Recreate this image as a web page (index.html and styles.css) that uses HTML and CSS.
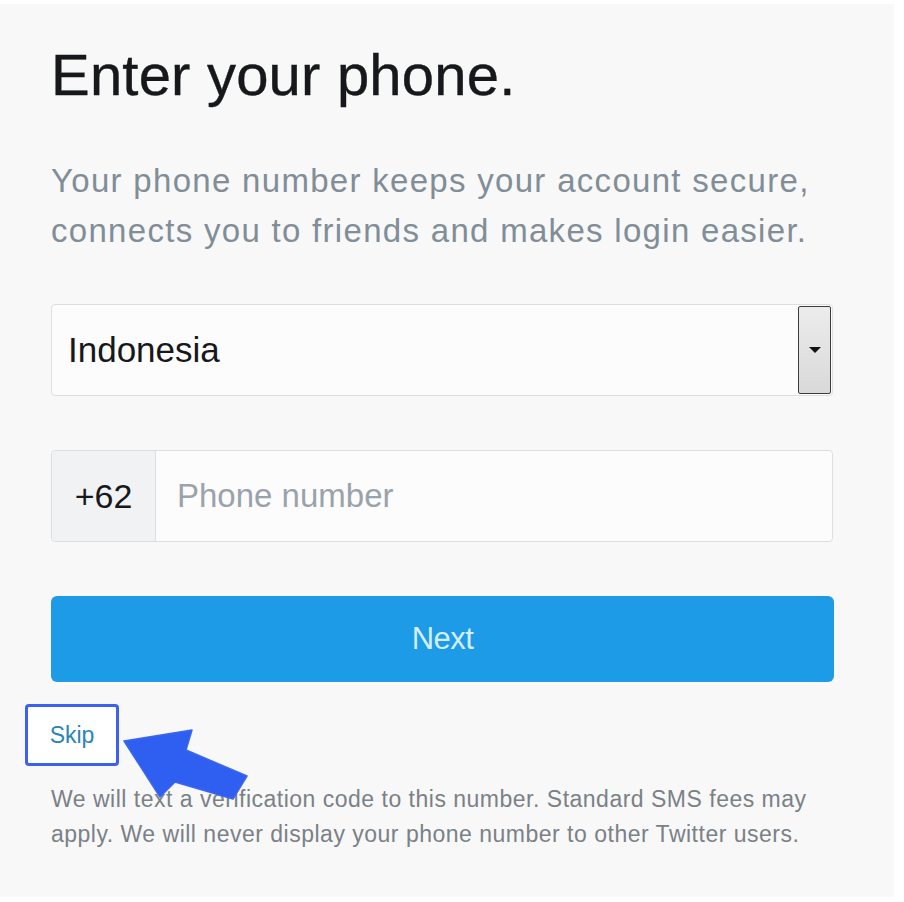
FILE: index.html
```html
<!DOCTYPE html>
<html lang="en">
<head>
<meta charset="utf-8">
<title>Enter your phone</title>
<link rel="stylesheet" href="styles.css">
</head>
<body>
<main class="card">
  <h1 class="title">Enter your phone.</h1>
  <p class="lead">Your phone number keeps your account secure, connects you to friends and makes login easier.</p>

  <div class="select">
    <span class="select-value">Indonesia</span>
    <span class="select-btn"><span class="caret"></span></span>
  </div>

  <div class="phone">
    <span class="prefix">+62</span>
    <span class="placeholder">Phone number</span>
  </div>

  <button class="next" type="button">Next</button>

  <div class="skip-row">
    <a class="skip" href="#">Skip</a>
  </div>

  <p class="note">We will text a verification code to this number. Standard SMS fees may apply. We will never display your phone number to other Twitter users.</p>

  <svg class="pointer" width="140" height="90" viewBox="0 0 140 90" aria-hidden="true">
    <polygon points="4,17 72,6 66,26 127,52 113,75 55,58 40,73" fill="#2f5ff0" stroke="#3a66f2" stroke-width="1.5" stroke-linejoin="round"/>
  </svg>
</main>
</body>
</html>
```

FILE: styles.css
```css
* { box-sizing: border-box; }

html, body {
  margin: 0;
  padding: 0;
  background: #ffffff;
}

body {
  font-family: "Liberation Sans", Arial, sans-serif;
  width: 904px;
  height: 902px;
  overflow: hidden;
}

.card {
  position: relative;
  margin-top: 4px;
  width: 894px;
  height: 893px;
  background: #f8f8f8;
  padding: 41px 0 0 51px;
}

.title {
  margin: 0;
  font-size: 58px;
  line-height: 59px;
  font-weight: normal;
  color: #16181b;
  letter-spacing: 0.2px;
  -webkit-text-stroke: 0.4px #16181b;
}

.lead {
  margin: 52px 0 0 0;
  width: 810px;
  font-size: 33px;
  line-height: 50px;
  letter-spacing: 1.3px;
  color: #818d97;
}

.select {
  margin-top: 48px;
  width: 782px;
  height: 92px;
  background: #fcfcfc;
  border: 1px solid #dcdfe2;
  border-radius: 4px;
  display: flex;
  align-items: center;
  justify-content: space-between;
  padding: 0 1px 0 16px;
}

.select-value {
  font-size: 35px;
  color: #16181b;
}

.select-btn {
  width: 33px;
  height: 88px;
  border: 1.5px solid #3a3d40;
  border-radius: 2px;
  background: linear-gradient(#ececec, #d9d9d9);
  display: flex;
  align-items: center;
  justify-content: center;
}

.caret {
  width: 0;
  height: 0;
  border-left: 6px solid transparent;
  border-right: 6px solid transparent;
  border-top: 6px solid #111;
}

.phone {
  margin-top: 54px;
  width: 782px;
  height: 92px;
  background: #fcfcfc;
  border: 1px solid #dcdfe2;
  border-radius: 4px;
  display: flex;
  align-items: stretch;
}

.prefix {
  width: 104px;
  background: #f1f2f4;
  border-right: 1px solid #dcdfe2;
  border-radius: 4px 0 0 4px;
  display: flex;
  align-items: center;
  justify-content: center;
  font-size: 34px;
  color: #16181b;
}

.placeholder {
  display: flex;
  align-items: center;
  padding-left: 21px;
  font-size: 33px;
  color: #9aa3ab;
}

.next {
  display: block;
  margin-top: 54px;
  width: 783px;
  height: 86px;
  border: none;
  border-radius: 6px;
  background: #1d9be7;
  color: #d4eefc;
  font-family: "Liberation Sans", Arial, sans-serif;
  font-size: 31px;
  letter-spacing: -0.5px;
  padding: 0;
}

.skip-row {
  margin: 22px 0 0 -26px;
  display: flex;
}

.skip {
  width: 94px;
  height: 62px;
  border: 3px solid #3c60ef;
  border-radius: 4px;
  background: #ffffff;
  display: flex;
  align-items: center;
  justify-content: center;
  font-size: 23px;
  color: #2b84b6;
  text-decoration: none;
}

.note {
  margin: 16px 0 0 0;
  width: 780px;
  font-size: 23px;
  line-height: 35px;
  color: #7a8187;
  letter-spacing: 0.5px;
}

.pointer {
  position: absolute;
  left: 120px;
  top: 720px;
}
```
